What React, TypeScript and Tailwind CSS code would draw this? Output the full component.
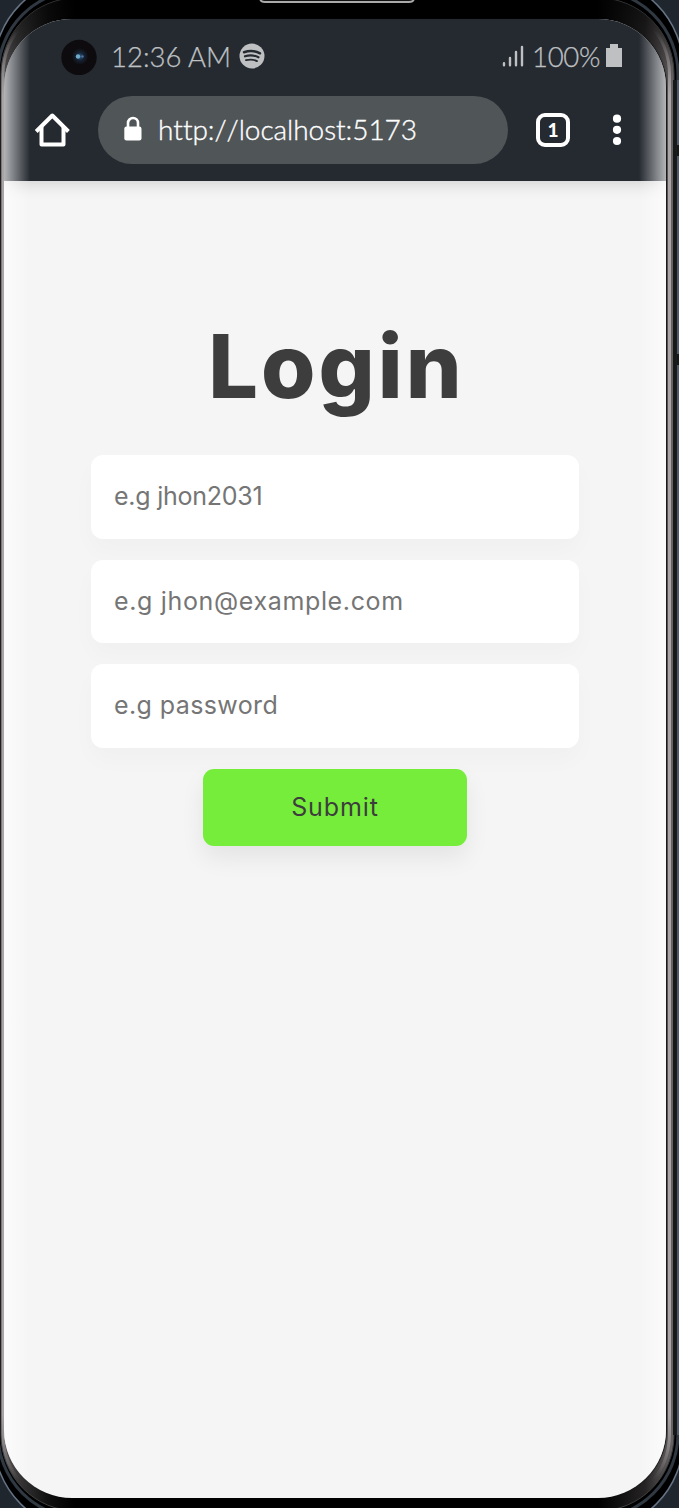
function StatusBar() {
  return (
    <div className="flex h-[77px] items-center pl-[57px] pr-[44px] text-[#bfc0c2] text-[27.5px] leading-[34px] font-light font-['Lato',sans-serif] [-webkit-text-stroke:0.25px_#bfc0c2]">
      <svg className="-mt-[2px]" width="36" height="36" viewBox="0 0 36 36">
        <defs>
          <radialGradient id="lens">
            <stop offset="0" stopColor="#355b7e" />
            <stop offset=".5" stopColor="#142234" />
            <stop offset="1" stopColor="#100e10" />
          </radialGradient>
        </defs>
        <circle cx="18" cy="18.5" r="17.7" fill="#0d0b0d" />
        <circle cx="19" cy="17.5" r="8" fill="url(#lens)" />
        <circle cx="17" cy="17.5" r="2.2" fill="#6eabc8" />
        <circle cx="21.5" cy="17.5" r="1.2" fill="#4c71a4" />
      </svg>
      <span className="ml-[14px] -mt-[2px] w-[121px] whitespace-nowrap">12:36 AM</span>
      <svg className="ml-[7px] -mt-[4px]" width="26" height="26" viewBox="0 0 26 26" fill="none" strokeLinecap="round" stroke="#252a31">
        <circle cx="13" cy="13" r="12.5" fill="#bfc0c2" stroke="none" />
        <path d="M5 9.2Q13.5 6.2 21 10.3" strokeWidth="2.5" />
        <path d="M6 13.3Q13 11 19.5 14.3" strokeWidth="2.1" />
        <path d="M7 17.2Q13 15.5 18 18.1" strokeWidth="1.8" />
      </svg>
      <div className="flex-1" />
      <svg className="-mt-[3px]" width="22" height="24" viewBox="0 0 22 24" stroke="#bfc0c2" strokeWidth="2.4" strokeLinecap="round">
        <path d="M2 19.2v2M8 14v7.2M14 8v13.2M20 3v18.2" />
      </svg>
      <span className="ml-[8px] -mt-[2px] w-[68px] whitespace-nowrap tracking-[-0.3px]">100%</span>
      <svg className="ml-[6px] -mt-[4px]" width="16" height="23" viewBox="0 0 16 23" fill="#bfc0c2">
        <path d="M4 0h8v4h4v19H0V4h4z" />
      </svg>
    </div>
  );
}

function BrowserBar() {
  return (
    <div className="flex h-[68px] items-center pl-[30px] pr-[44px]">
      <svg width="36" height="36" viewBox="0 0 36 36" fill="none" stroke="white" strokeWidth="4" strokeLinejoin="round">
        <path d="M2.2 19.5 18.3 3.5l16.1 16" />
        <path d="M7.5 15V32.5h22V15" />
      </svg>
      <div className="ml-[28px] flex h-[68px] w-[410px] items-center rounded-full bg-[#505558] pl-[26px] text-white">
        <svg className="-mt-[3px]" width="18" height="25" viewBox="0 0 18 25">
          <rect x="0.3" y="10.5" width="17.2" height="14" rx="2.2" fill="white" />
          <path d="M4 12V7a5 5 0 0 1 10 0v5" fill="none" stroke="white" strokeWidth="2.6" />
        </svg>
        <span className="ml-[16px] -mt-[2px] whitespace-nowrap font-light font-['Lato',sans-serif] text-[28px] leading-[34px] tracking-[-0.05px] [font-kerning:none] [-webkit-text-stroke:0.35px_white]">http://localhost:5173</span>
      </div>
      <div className="ml-[28px] flex size-[34px] items-center justify-center rounded-[9px] border-[4px] border-white pb-[2px] font-['Lato',sans-serif] text-[19px] leading-none font-black text-white">1</div>
      <svg className="ml-auto" width="10" height="32" viewBox="0 0 10 32" fill="white">
        <circle cx="5" cy="4.7" r="4.1" />
        <circle cx="5" cy="15.8" r="4.1" />
        <circle cx="5" cy="27" r="4.1" />
      </svg>
    </div>
  );
}

const fields = [
  { hint: "e.g jhon2031", spacing: "tracking-[-0.25px]" },
  { hint: "e.g jhon@example.com", spacing: "tracking-[0.65px]" },
  { hint: "e.g password", spacing: "tracking-[0.4px]" },
];

export default function App() {
  return (
    <div className="relative h-[1508px] w-[679px] overflow-hidden bg-[#20262d] pt-[19px] pl-[4px]">
      <svg className="absolute inset-0" width="679" height="1508" viewBox="0 0 679 1508" fill="none">
        <defs>
          <linearGradient id="rim" x1="0" x2="679" gradientUnits="userSpaceOnUse">
            <stop offset="0" stopColor="#605c5e" />
            <stop offset=".025" stopColor="#3b3939" />
            <stop offset=".07" stopColor="#111" />
            <stop offset=".11" stopColor="#000" />
            <stop offset=".88" stopColor="#000" />
            <stop offset=".95" stopColor="#252323" />
            <stop offset="1" stopColor="#777274" />
          </linearGradient>
          <linearGradient id="topShade" x1="0" x2="0" y1="0" y2="85" gradientUnits="userSpaceOnUse">
            <stop offset="0" stopColor="#000" stopOpacity=".5" />
            <stop offset="1" stopColor="#000" stopOpacity="0" />
          </linearGradient>
          <linearGradient id="rail" x1="0" x2="0" y1="30" y2="1480" gradientUnits="userSpaceOnUse">
            <stop offset="0" stopColor="#aaa4a6" stopOpacity="0" />
            <stop offset=".045" stopColor="#aaa4a6" />
            <stop offset=".955" stopColor="#aaa4a6" />
            <stop offset="1" stopColor="#aaa4a6" stopOpacity="0" />
          </linearGradient>
        </defs>
        <rect x="-6" y="-22" width="689" height="1552" rx="90" fill="#000" stroke="#657385" strokeWidth="1.5" />
        <rect x="-2" y="-10" width="680" height="1528" rx="84" stroke="#303842" strokeWidth="3" />
        <path d="M678.5 80V1435" stroke="#515b68" strokeWidth="3" />
        <rect x="1" y="-2" width="673" height="1513" rx="76" fill="url(#rim)" stroke="#3d3e40" strokeWidth="1" />
        <rect x="1" y="-2" width="673" height="160" rx="76" fill="url(#topShade)" />
        <rect x="3" y="1" width="666.5" height="1507" rx="74" stroke="url(#rail)" strokeWidth="3" />
        <path d="M674.5 80V1435" stroke="#151a19" strokeWidth="3" />
        <path d="M677 145h2v11h-2zM677 354h2v11h-2z" fill="#171717" />
        <path d="M260-2q0 4 5 4h144q5 0 5-4" fill="#111" stroke="#aaa" strokeWidth="1.8" />
      </svg>
      <main className="relative h-[1479px] w-[662px] overflow-hidden rounded-[68px] bg-[#f5f5f5] shadow-[1px_0_1px_#151515]">
        <header className="h-[162px] bg-[#252a31] shadow-[0_2px_16px_rgba(0,0,0,0.16)]">
          <StatusBar />
          <BrowserBar />
        </header>
        <section className="flex flex-col pt-[112px] pl-[87px] font-['Inter',sans-serif]">
          <div className="flex w-[488px] flex-col">
            <h1 className="flex h-[145px] items-center justify-center pl-[3px] text-[88px] tracking-[3px] font-extrabold text-[#3d3d3d]">Login</h1>
            <div className="flex flex-col gap-[21px] pt-[17px]">
              {fields.map(({ hint, spacing }) => (
                <label key={hint} className="flex h-[83.5px] items-center rounded-[12px] bg-white pl-[23px] text-[25px] text-[#757575] shadow-[0_12px_24px_rgba(0,0,0,0.025)]">
                  <span className={spacing}>{hint}</span>
                </label>
              ))}
            </div>
            <button className="mt-[21px] h-[77px] w-[264px] self-center rounded-[11px] bg-[#77ed3b] pt-[2px] text-[25px] tracking-[0.9px] text-[#3d3d3d] shadow-[0_12px_24px_rgba(0,0,0,0.07)]">Submit</button>
          </div>
        </section>
        <div className="pointer-events-none absolute inset-y-0 left-0 w-[26px] bg-linear-to-r from-white/65 to-transparent" />
        <div className="pointer-events-none absolute inset-y-0 right-0 w-[27px] bg-linear-to-l from-white/65 to-transparent" />
      </main>
    </div>
  );
}
